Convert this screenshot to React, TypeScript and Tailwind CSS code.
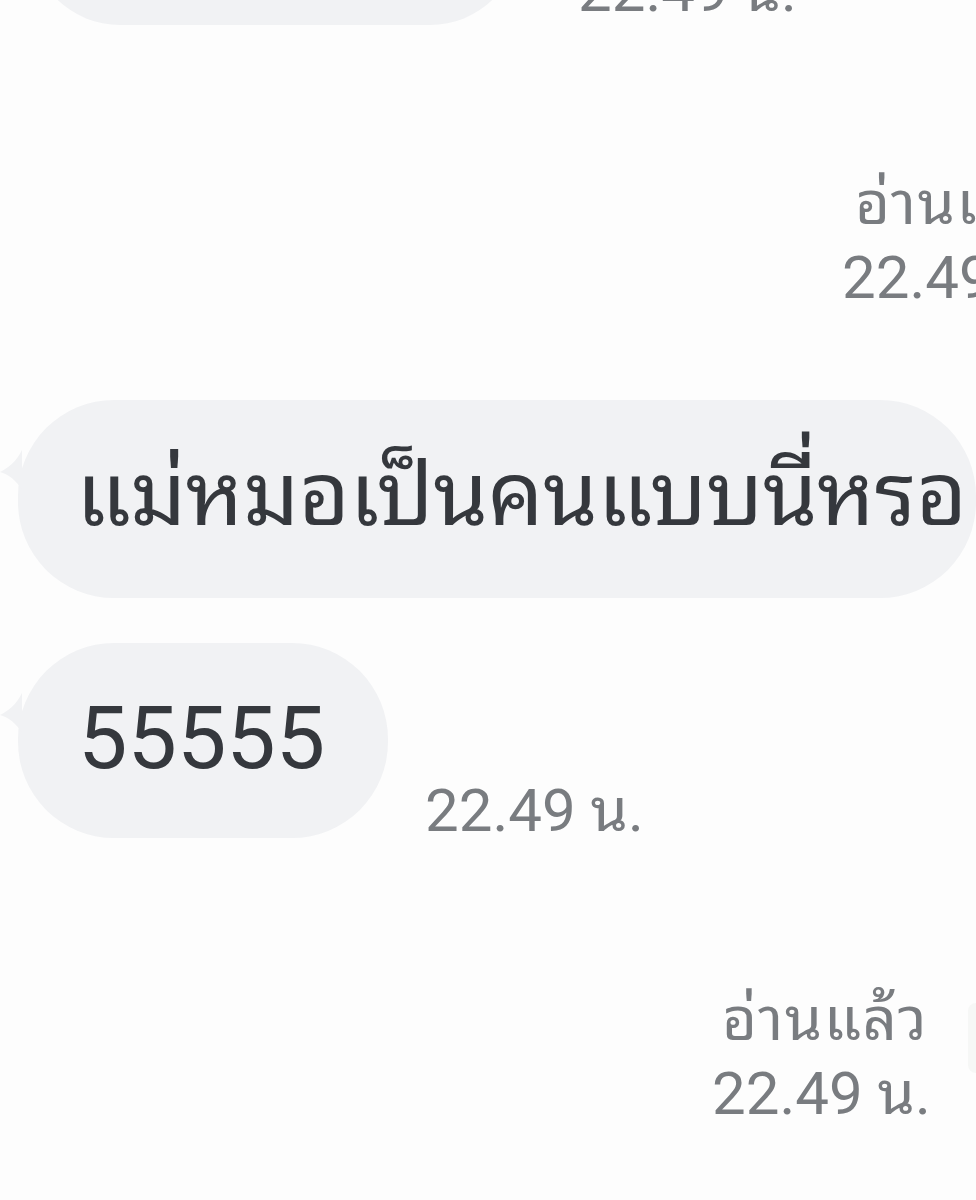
import React from "react";

// chat bubble colours from the screenshot
const BUBBLE = "bg-[#f1f2f4]";

function Tail() {
  return (
    <svg
      width="22"
      height="40"
      viewBox="0 0 22 40"
      className="absolute left-[-18px] top-[50px]"
    >
      <path d="M22 0 C16 12 8 18 0 22 C8 24 16 30 22 40 Z" fill="#f1f2f4" />
    </svg>
  );
}

function Stamp({ read, time, className }: { read?: boolean; time: string; className?: string }) {
  return (
    <div
      className={`text-[60px] leading-[74px] text-[#797c80] text-right whitespace-nowrap font-['Roboto','Noto_Sans_Thai_Looped','Noto_Sans_Thai',sans-serif] ${className ?? ""}`}
    >
      {read && <div className="tracking-[1.5px]">อ่านแล้ว</div>}
      <div>{time}</div>
    </div>
  );
}

export default function App() {
  return (
    <div className="w-[976px] h-[1200px] overflow-hidden bg-[#fdfdfd] font-['Roboto','Noto_Sans_Thai_Looped','Noto_Sans_Thai',sans-serif]">
      {/* previous incoming bubble, cut at the top */}
      <div className="flex items-end">
        <div className={`ml-[30px] mt-[-170px] w-[490px] h-[195px] rounded-[90px] ${BUBBLE}`} />
        <Stamp time="22.49 น." className="ml-[58px] mt-[-100px] mb-[-3px]" />
      </div>

      {/* read receipt, sent bubble off-screen to the right */}
      <div className="mt-[142px] flex">
        <Stamp read time="22.49 น." className="ml-[842px]" />
      </div>

      {/* incoming message */}
      <div className="mt-[85px] flex">
        <div className={`relative ml-[18px] w-[1000px] h-[198px] rounded-[96px] ${BUBBLE} pl-[58px] pt-[40px]`}>
          <Tail />
          <div className="text-[88px] leading-[110px] text-[#35383d] whitespace-nowrap tracking-[-0.5px]">
            แม่หมอเป็นคนแบบนี่หรอ
          </div>
        </div>
      </div>

      <div className="mt-[45px] flex items-end">
        <div className={`relative ml-[18px] w-[370px] h-[195px] rounded-[96px] ${BUBBLE} pl-[60px] pt-[40px]`}>
          <Tail />
          <div className="text-[88px] leading-[110px] text-[#35383d] whitespace-nowrap">55555</div>
        </div>
        <Stamp time="22.49 น." className="ml-[37px] mb-[-10px]" />
      </div>

      {/* read receipt next to a sent bubble at the right edge */}
      <div className="mt-[145px] flex items-start">
        <Stamp read time="22.49 น." className="ml-[712px] w-[216px]" />
        <div className="ml-[40px] mt-[20px] w-[200px] h-[70px] rounded-l-[40px] bg-[#f6f7f6]" />
      </div>
    </div>
  );
}
